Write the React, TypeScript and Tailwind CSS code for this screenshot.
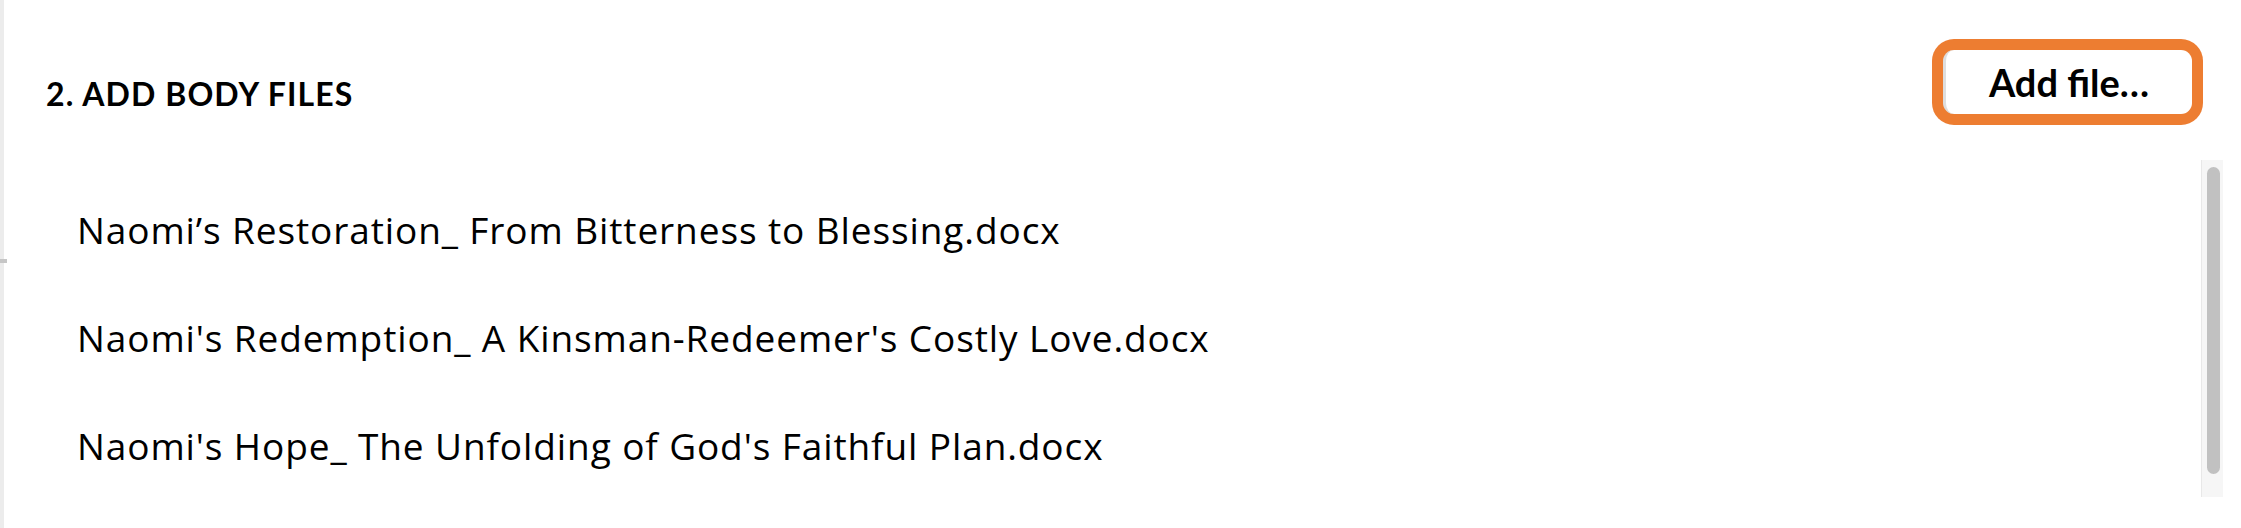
import React from "react";

const files = [
  "Naomi\u2019s Restoration_ From Bitterness to Blessing.docx",
  "Naomi's Redemption_ A Kinsman-Redeemer's Costly Love.docx",
  "Naomi's Hope_ The Unfolding of God's Faithful Plan.docx",
];

export default function App() {
  return (
    <div
      className="flex h-[528px] w-full bg-white text-black overflow-hidden"
      style={{ fontFamily: "Lato, 'Noto Sans', sans-serif" }}
    >
      <div className="w-[4px] shrink-0 bg-[#ececec] flex flex-col">
        <div className="mt-[259px] h-[4px] w-[7px] bg-[#c6c6c6]" />
      </div>
      <div className="flex-1 flex flex-col">
        <div className="flex items-start justify-between pt-[39px] pr-[38px]">
          <h2 className="ml-[42px] mt-[35px] text-[32px] leading-[40px] font-bold tracking-[1.1px] uppercase">
            2. Add body files
          </h2>
          <div className="w-[271px] h-[86px] rounded-[22px] bg-[#ed7d31] p-[11px]">
            <button className="w-full h-full rounded-[11px] bg-white border-l-[3px] border-[#dedede] flex items-center justify-center text-[38px] font-bold leading-none">
              Add file…
            </button>
          </div>
        </div>
        <div className="mt-[35px] flex h-[337px] pr-[18px]">
          <ul
            className="flex-1 pl-[73px] pt-[16px]"
            style={{ fontFamily: "'Open Sans', 'Noto Sans', sans-serif" }}
          >
            {files.map((f) => (
              <li key={f} className="h-[108px] text-[37px] tracking-[0.9px] leading-[108px] whitespace-nowrap">
                {f}
              </li>
            ))}
          </ul>
          <div className="w-[22px] h-full bg-[#f6f6f6] border-l border-[#e8e8e8] pl-[5px] pr-[3px] pt-[7px] pb-[23px]">
            <div className="w-[13px] h-full rounded-full bg-[#c1c1c1]" />
          </div>
        </div>
      </div>
    </div>
  );
}
